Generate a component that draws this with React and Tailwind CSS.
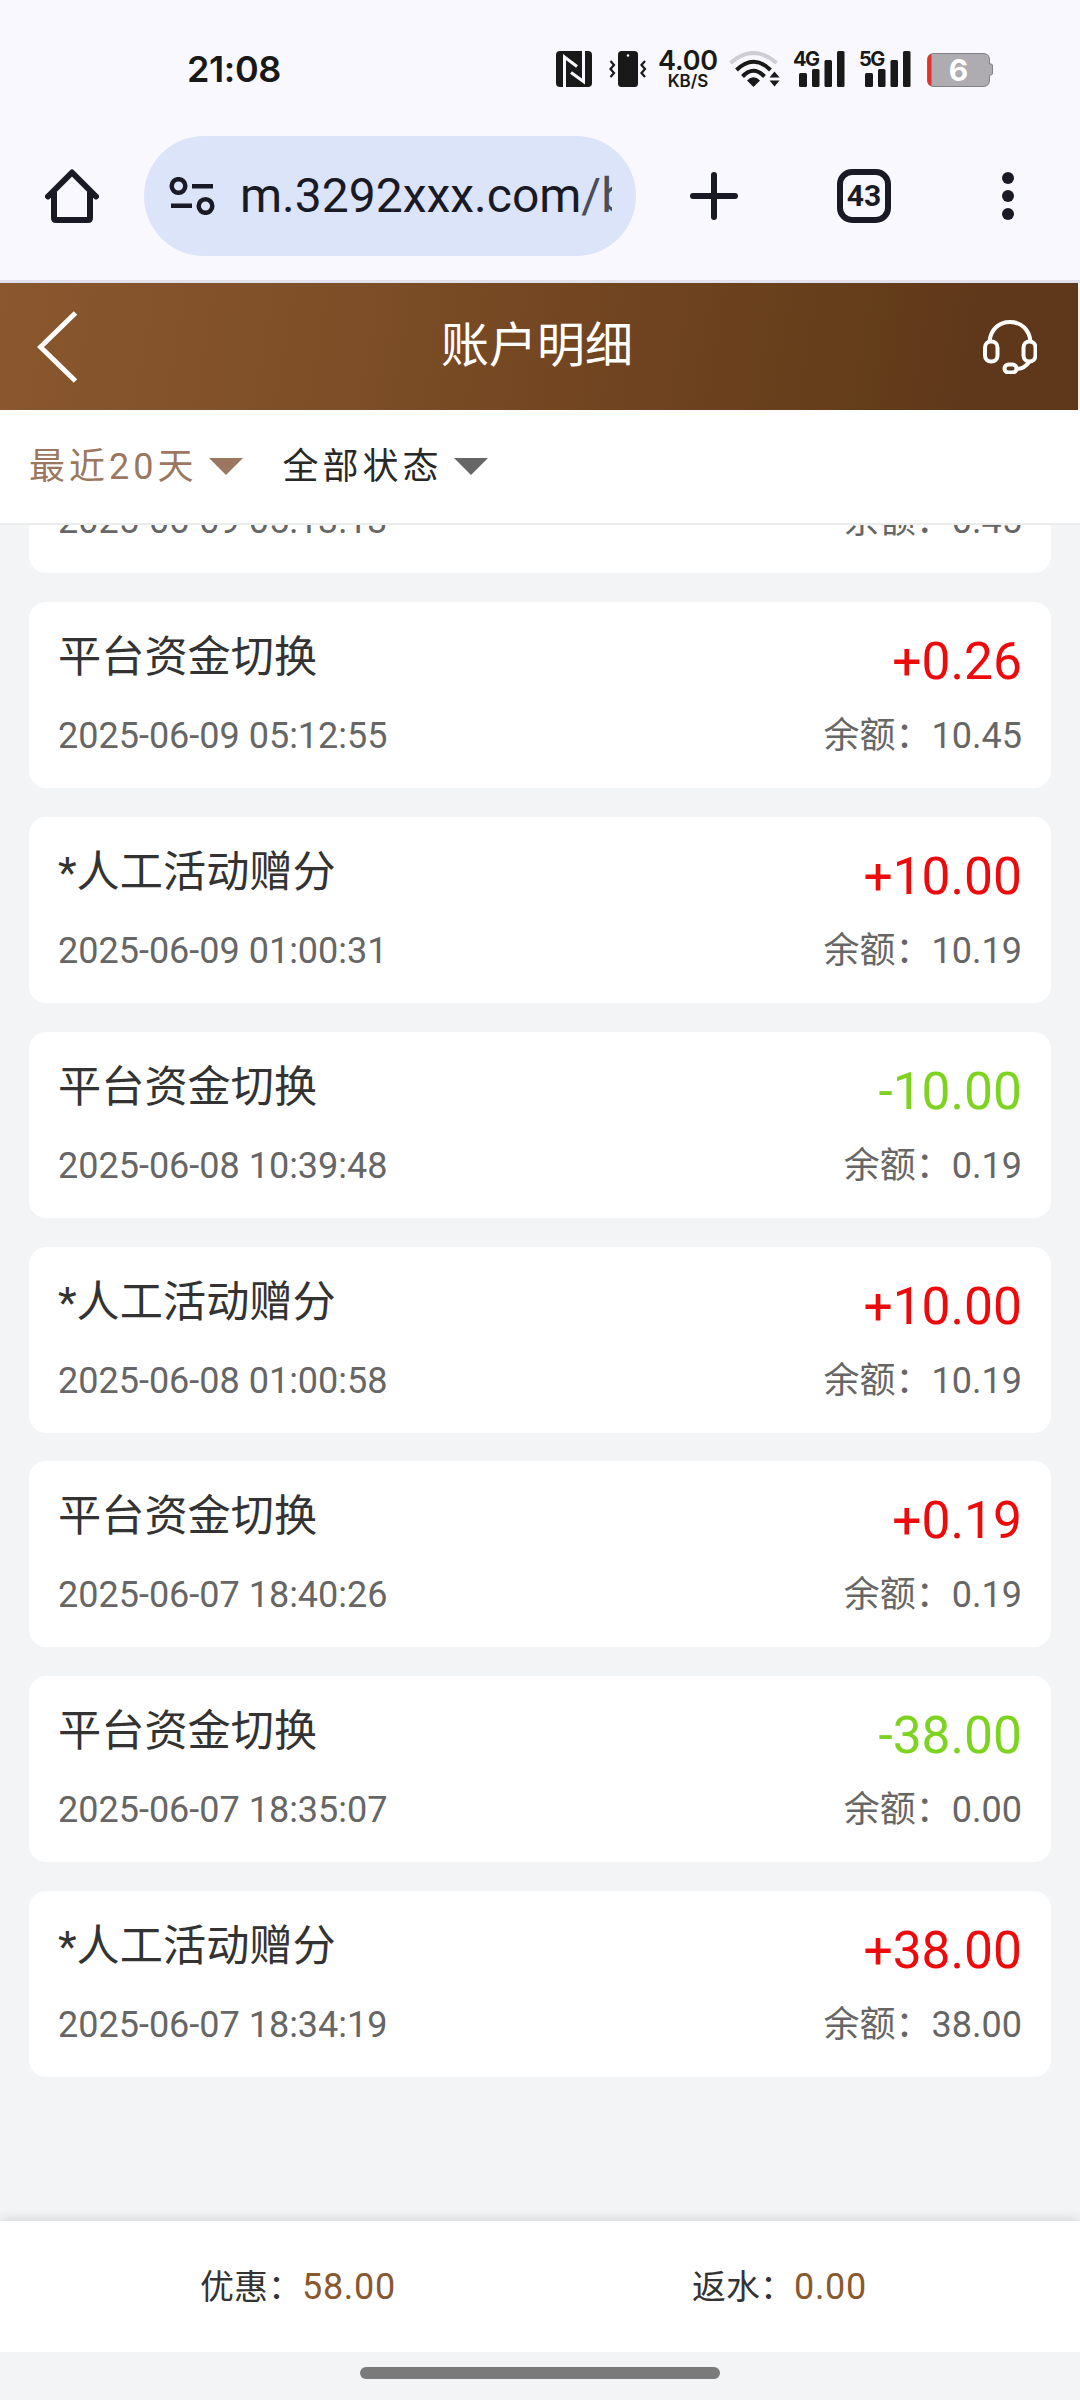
import clsx from "clsx";

const records = [
  { title: "平台资金切换", amount: "+0.19", time: "2025-06-09 05:13:13", balance: "0.45" },
  { title: "平台资金切换", amount: "+0.26", time: "2025-06-09 05:12:55", balance: "10.45" },
  { title: "*人工活动赠分", amount: "+10.00", time: "2025-06-09 01:00:31", balance: "10.19" },
  { title: "平台资金切换", amount: "-10.00", time: "2025-06-08 10:39:48", balance: "0.19" },
  { title: "*人工活动赠分", amount: "+10.00", time: "2025-06-08 01:00:58", balance: "10.19" },
  { title: "平台资金切换", amount: "+0.19", time: "2025-06-07 18:40:26", balance: "0.19" },
  { title: "平台资金切换", amount: "-38.00", time: "2025-06-07 18:35:07", balance: "0.00" },
  { title: "*人工活动赠分", amount: "+38.00", time: "2025-06-07 18:34:19", balance: "38.00" },
];

function Signal({ label, className }) {
  return (
    <div className={clsx("relative h-9 w-[52px]", className)}>
      <span className="absolute -top-px left-0 font-['Inter'] text-[20px] leading-[18px] font-bold tracking-[-1.5px]">{label}</span>
      <svg className="size-full" viewBox="0 0 52 36" fill="currentColor">
        <rect x="6" y="22" width="8" height="14" rx="1.5" />
        <rect x="19" y="18" width="7.5" height="18" rx="1.5" />
        <rect x="31.5" y="9" width="7.5" height="27" rx="1.5" />
        <rect x="44" y="0" width="7.5" height="36" rx="1.5" />
      </svg>
    </div>
  );
}

function StatusBar() {
  return (
    <div className="flex h-[136px] items-start pt-[51px] pl-[187px] text-[#191919]">
      <div className="w-[369px] pt-px font-['Inter'] text-[36px] leading-[34px] font-semibold tracking-[-0.4px]">21:08</div>
      <svg className="size-9" viewBox="0 0 36 36">
        <rect width="36" height="36" rx="4" fill="currentColor" />
        <path d="M8.500 36V6L21 15.500M27.500 0v30.500L15 21.500" fill="none" stroke="#f9f8fe" strokeWidth="3" />
      </svg>
      <svg className="ml-[17px] h-9 w-[39px]" viewBox="0 0 39 36">
        <rect x="9" width="20" height="36" rx="3.500" fill="currentColor" />
        <circle cx="19" cy="4.500" r="1.200" fill="#fff" />
        <path d="M1.500 10l3.500 4-3.500 4 3.500 4-3.500 4M36 10l-3.500 4 3.500 4-3.500 4 3.500 4" fill="none" stroke="currentColor" strokeWidth="2.200" />
      </svg>
      <div className="ml-[9px] flex h-9 w-[62px] flex-col items-center font-['Inter']">
        <span className="text-[27px] leading-[20px] font-semibold tracking-[-0.2px]">4.00</span>
        <span className="mt-[2px] text-[17px] leading-[16px] font-semibold">KB/S</span>
      </div>
      <svg className="ml-[10px] h-9 w-[52px]" viewBox="0 0 52 36" fill="none" strokeWidth="4">
        <path d="M1.500 12Q24.500-8 47.500 12" stroke="#cfcdd4" />
        <path d="M7.500 19Q24.500 2.500 41.500 19M13.500 25.500Q24.500 14 35.500 25.500" stroke="currentColor" />
        <path d="M18 29.500Q24.500 23 31 29.500L24.500 36ZM40.500 26.500L45.500 20.500L50.500 26.500ZM40.500 29.500L45.500 35.500L50.500 29.500Z" fill="currentColor" />
      </svg>
      <Signal label="4G" className="ml-[12px]" />
      <Signal label="5G" className="ml-[14px]" />
      <div className="relative ml-[16px] h-9 w-[67px]">
        <svg className="size-full" viewBox="0 0 67 36">
          <path d="M7 2.500H56Q62.500 2.500 62.500 9V13H64Q65.500 13 65.500 15V22Q65.500 24 64 24H62.500V29Q62.500 35.500 56 35.500H7Q.5 35.500.5 29V9Q.5 2.500 7 2.500Z" fill="#aeacb1" stroke="#828186" />
          <path d="M4.500 3V35Q.5 34 .5 29V9Q.5 4 4.500 3Z" fill="#e3342c" />
        </svg>
        <span className="absolute top-[2px] left-0 w-[63px] text-center font-['Inter'] text-[30px] leading-[34px] font-bold text-white">6</span>
      </div>
    </div>
  );
}

function BrowserBar() {
  return (
    <div className="flex h-[147px] items-start border-b-[3px] border-[#e1e1ed] pl-[45px] text-[#191a25]">
      <svg className="mt-[33px] h-[54px] w-[54px]" viewBox="0 0 54 54" fill="none" stroke="currentColor" strokeWidth="6">
        <path d="M3 27.500L27 3.500L51 27.500" strokeLinecap="round" strokeLinejoin="round" />
        <path d="M9 23V49Q9 51 11 51H43Q45 51 45 49V23" />
      </svg>
      <div className="ml-[45px] flex h-[120px] w-[492px] items-center overflow-hidden rounded-full bg-[#dbe4f8] pl-[25px]">
        <svg className="h-[38px] w-[46px] shrink-0" viewBox="0 0 46 38" fill="none" stroke="currentColor">
          <circle cx="9.500" cy="9" r="6.800" strokeWidth="4.500" />
          <circle cx="36.500" cy="29" r="6.800" strokeWidth="4.500" />
          <path d="M23 9.200H44M2 28.700H23" strokeWidth="4.500" />
        </svg>
        <div className="ml-[25px] w-[372px] overflow-hidden text-[48px] leading-[60px] whitespace-nowrap">
          m.3292xxx.com<span className="text-[#4a4d5c]">/b</span>
        </div>
      </div>
      <svg className="mt-[36px] ml-[54px] size-12" viewBox="0 0 48 48" stroke="currentColor" strokeWidth="6" strokeLinecap="round">
        <path d="M24 3V45M3 24H45" />
      </svg>
      <div className="mt-[33px] ml-[99px] flex size-[54px] items-center justify-center rounded-[15px] border-6 border-[#191a25] text-[30px] leading-none font-bold">43</div>
      <svg className="mt-[36px] ml-[111px] h-12 w-3" viewBox="0 0 12 48" fill="currentColor">
        <circle cx="6" cy="6" r="6" />
        <circle cx="6" cy="24" r="6" />
        <circle cx="6" cy="42" r="6" />
      </svg>
    </div>
  );
}

function PageHeader() {
  return (
    <header className="mr-[2px] flex h-[127px] items-center justify-between bg-linear-[100deg,#8a572e_0%,#7d4e27_33%,#6f431f_60%,#643d1a_80%,#5f371b_90%,#5f371b_100%] pr-[41px] pl-[37px] text-white">
      <svg className="h-[72px] w-[54px]" viewBox="0 0 54 72" fill="none" stroke="currentColor" strokeWidth="5">
        <path d="M38.500 2L3.500 36L38.500 70" />
      </svg>
      <h1 className="pb-[2px] text-[48px] leading-[60px]">账户明细</h1>
      <svg className="size-[54px]" viewBox="0 0 54 54" fill="none" stroke="currentColor" strokeWidth="4">
        <path d="M6.500 22C7.500 9.500 16 2 27 2S46.500 9.500 47.500 22" />
        <rect x="2" y="21.500" width="12.500" height="20" rx="6" />
        <rect x="40.500" y="21.500" width="12" height="20" rx="6" />
        <path d="M46 42Q42 48.500 34 49" />
        <rect x="21.500" y="44.500" width="12" height="8" rx="4" />
      </svg>
    </header>
  );
}

function Filter({ label, active }) {
  return (
    <div className={clsx("flex items-center gap-[12px]", active ? "text-[#9b7760]" : "text-[#282828]")}>
      <span className="text-[36px] leading-[48px] tracking-[4px]">{label}</span>
      <svg className={clsx("h-[17px] w-[34px]", active ? "text-[#9b7760]" : "text-[#666]")} viewBox="0 0 34 17" fill="currentColor">
        <path d="M0 0H34L17 17Z" />
      </svg>
    </div>
  );
}

function Record({ title, amount, time, balance }) {
  return (
    <div className="h-[186px] shrink-0 rounded-[17px] bg-white px-[29px] pt-[26px]">
      <div className="flex h-[67px] items-start justify-between">
        <span className="text-[43.2px] leading-[60px] text-[#333]">{title}</span>
        <span className={clsx("text-[51.5px] leading-[67px]", amount.startsWith("+") ? "text-[#ee0a0a]" : "text-[#7ed321]")}>{amount}</span>
      </div>
      <div className="mt-[17px] flex justify-between text-[36px] leading-[48px] text-[#666]">
        <span>{time}</span>
        <span>余额：{balance}</span>
      </div>
    </div>
  );
}

function Total({ label, value }) {
  return (
    <div className="text-[34px] leading-[48px] text-[#333]">
      {label}：<span className="text-[36px] tracking-[0.7px] text-[#88582f]">{value}</span>
    </div>
  );
}

export default function App() {
  return (
    <div className="flex h-[2400px] w-[1080px] flex-col overflow-hidden bg-[#f3f4f6] font-['Roboto','Noto_Sans_CJK_SC',sans-serif]">
      <div className="bg-[#f9f8fe]">
        <StatusBar />
        <BrowserBar />
      </div>
      <PageHeader />
      <div className="flex h-[115px] items-center gap-[39px] border-b-2 border-[#ebeded] bg-white pl-[29px]">
        <Filter label="最近20天" active />
        <Filter label="全部状态" />
      </div>
      <main className="h-[1696px] overflow-hidden px-[29px]">
        <div className="-mt-[137.800px] flex flex-col gap-[28.830px]">
          {records.map((record) => (
            <Record key={record.time} {...record} />
          ))}
        </div>
      </main>
      <footer className="z-10 flex h-[131px] items-center bg-white pl-[200px] shadow-[0_0_12px_rgba(0,0,0,0.16)]">
        <div className="w-[492px]">
          <Total label="优惠" value="58.00" />
        </div>
        <Total label="返水" value="0.00" />
      </footer>
      <div className="z-20 flex grow justify-center bg-[#f3f4f6] pt-[15px]">
        <div className="h-3 w-[360px] rounded-full bg-[#7a7a7a]" />
      </div>
    </div>
  );
}
